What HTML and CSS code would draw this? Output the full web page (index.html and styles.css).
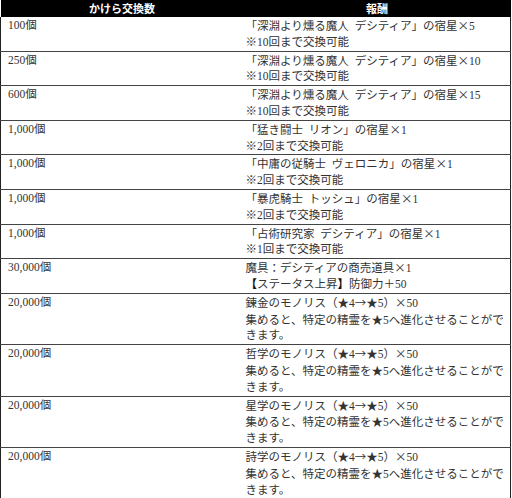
FILE: index.html
```html
<!DOCTYPE html>
<html lang="ja">
<head>
<meta charset="utf-8">
<link rel="stylesheet" href="styles.css">
</head>
<body>
<table class="rewards">
  <thead>
    <tr><th class="col-count">かけら交換数</th><th class="col-reward">報酬</th></tr>
  </thead>
  <tbody>
    <tr><td><span class="l">100個</span></td><td><span class="l">「深淵より燻る魔人 デシティア」の宿星<span class="s">×</span>5</span><span class="l">※10回まで交換可能</span></td></tr>
    <tr><td><span class="l">250個</span></td><td><span class="l">「深淵より燻る魔人 デシティア」の宿星<span class="s">×</span>10</span><span class="l">※10回まで交換可能</span></td></tr>
    <tr><td><span class="l">600個</span></td><td><span class="l">「深淵より燻る魔人 デシティア」の宿星<span class="s">×</span>15</span><span class="l">※10回まで交換可能</span></td></tr>
    <tr><td><span class="l">1,000個</span></td><td><span class="l">「猛き闘士 リオン」の宿星<span class="s">×</span>1</span><span class="l">※2回まで交換可能</span></td></tr>
    <tr><td><span class="l">1,000個</span></td><td><span class="l">「中庸の従騎士 ヴェロニカ」の宿星<span class="s">×</span>1</span><span class="l">※2回まで交換可能</span></td></tr>
    <tr><td><span class="l">1,000個</span></td><td><span class="l">「暴虎騎士 トッシュ」の宿星<span class="s">×</span>1</span><span class="l">※2回まで交換可能</span></td></tr>
    <tr><td><span class="l">1,000個</span></td><td><span class="l">「占術研究家 デシティア」の宿星<span class="s">×</span>1</span><span class="l">※1回まで交換可能</span></td></tr>
    <tr><td><span class="l">30,000個</span></td><td><span class="l">魔具：デシティアの商売道具<span class="s">×</span>1</span><span class="l"><b>【</b>ステータス上昇<b>】</b>防御力＋50</span></td></tr>
    <tr><td><span class="l">20,000個</span></td><td><span class="l">錬金のモノリス（<span class="s">★</span>4<span class="s">→</span><span class="s">★</span>5）<span class="s">×</span>50</span><span class="l">集めると、特定の精霊を<span class="s">★</span>5へ進化させることがで</span><span class="l">きます。</span></td></tr>
    <tr><td><span class="l">20,000個</span></td><td><span class="l">哲学のモノリス（<span class="s">★</span>4<span class="s">→</span><span class="s">★</span>5）<span class="s">×</span>50</span><span class="l">集めると、特定の精霊を<span class="s">★</span>5へ進化させることがで</span><span class="l">きます。</span></td></tr>
    <tr><td><span class="l">20,000個</span></td><td><span class="l">星学のモノリス（<span class="s">★</span>4<span class="s">→</span><span class="s">★</span>5）<span class="s">×</span>50</span><span class="l">集めると、特定の精霊を<span class="s">★</span>5へ進化させることがで</span><span class="l">きます。</span></td></tr>
    <tr><td><span class="l">20,000個</span></td><td><span class="l">詩学のモノリス（<span class="s">★</span>4<span class="s">→</span><span class="s">★</span>5）<span class="s">×</span>50</span><span class="l">集めると、特定の精霊を<span class="s">★</span>5へ進化させることがで</span><span class="l">きます。</span></td></tr>
  </tbody>
</table>
</body>
</html>
```
FILE: styles.css
```css
html, body {
  margin: 0;
  padding: 0;
  background: #ffffff;
}

.rewards {
  width: 511px;
  border-collapse: collapse;
  font-family: "Liberation Serif", "Noto Sans CJK JP", serif;
  font-size: 11.5px;
  color: #333333;
  table-layout: fixed;
}

.rewards th {
  background: #000000;
  color: #ffffff;
  font-family: "Noto Sans CJK JP", sans-serif;
  font-weight: bold;
  font-size: 11px;
  height: 17px;
  line-height: 17px;
  padding: 0;
  text-align: center;
}

.rewards .col-count {
  width: 243px;
}

.rewards td {
  border-top: 1px solid #444444;
  border-bottom: 1px solid #444444;
  vertical-align: top;
  padding: 0;
}

.rewards td:first-child {
  border-left: 1px solid #222222;
  padding-left: 7px;
}

.rewards td:last-child {
  border-right: 1px solid #222222;
  padding-left: 2px;
}

.rewards tbody tr:first-child td {
  border-top: none;
}

.l {
  display: block;
  white-space: nowrap;
  height: 16.8px;
  line-height: 16.8px;
  overflow: visible;
  word-spacing: 3px;
}

.s {
  font-family: "Noto Sans CJK JP", sans-serif;
}

.l b {
  font-weight: bold;
  color: #111111;
}
```
